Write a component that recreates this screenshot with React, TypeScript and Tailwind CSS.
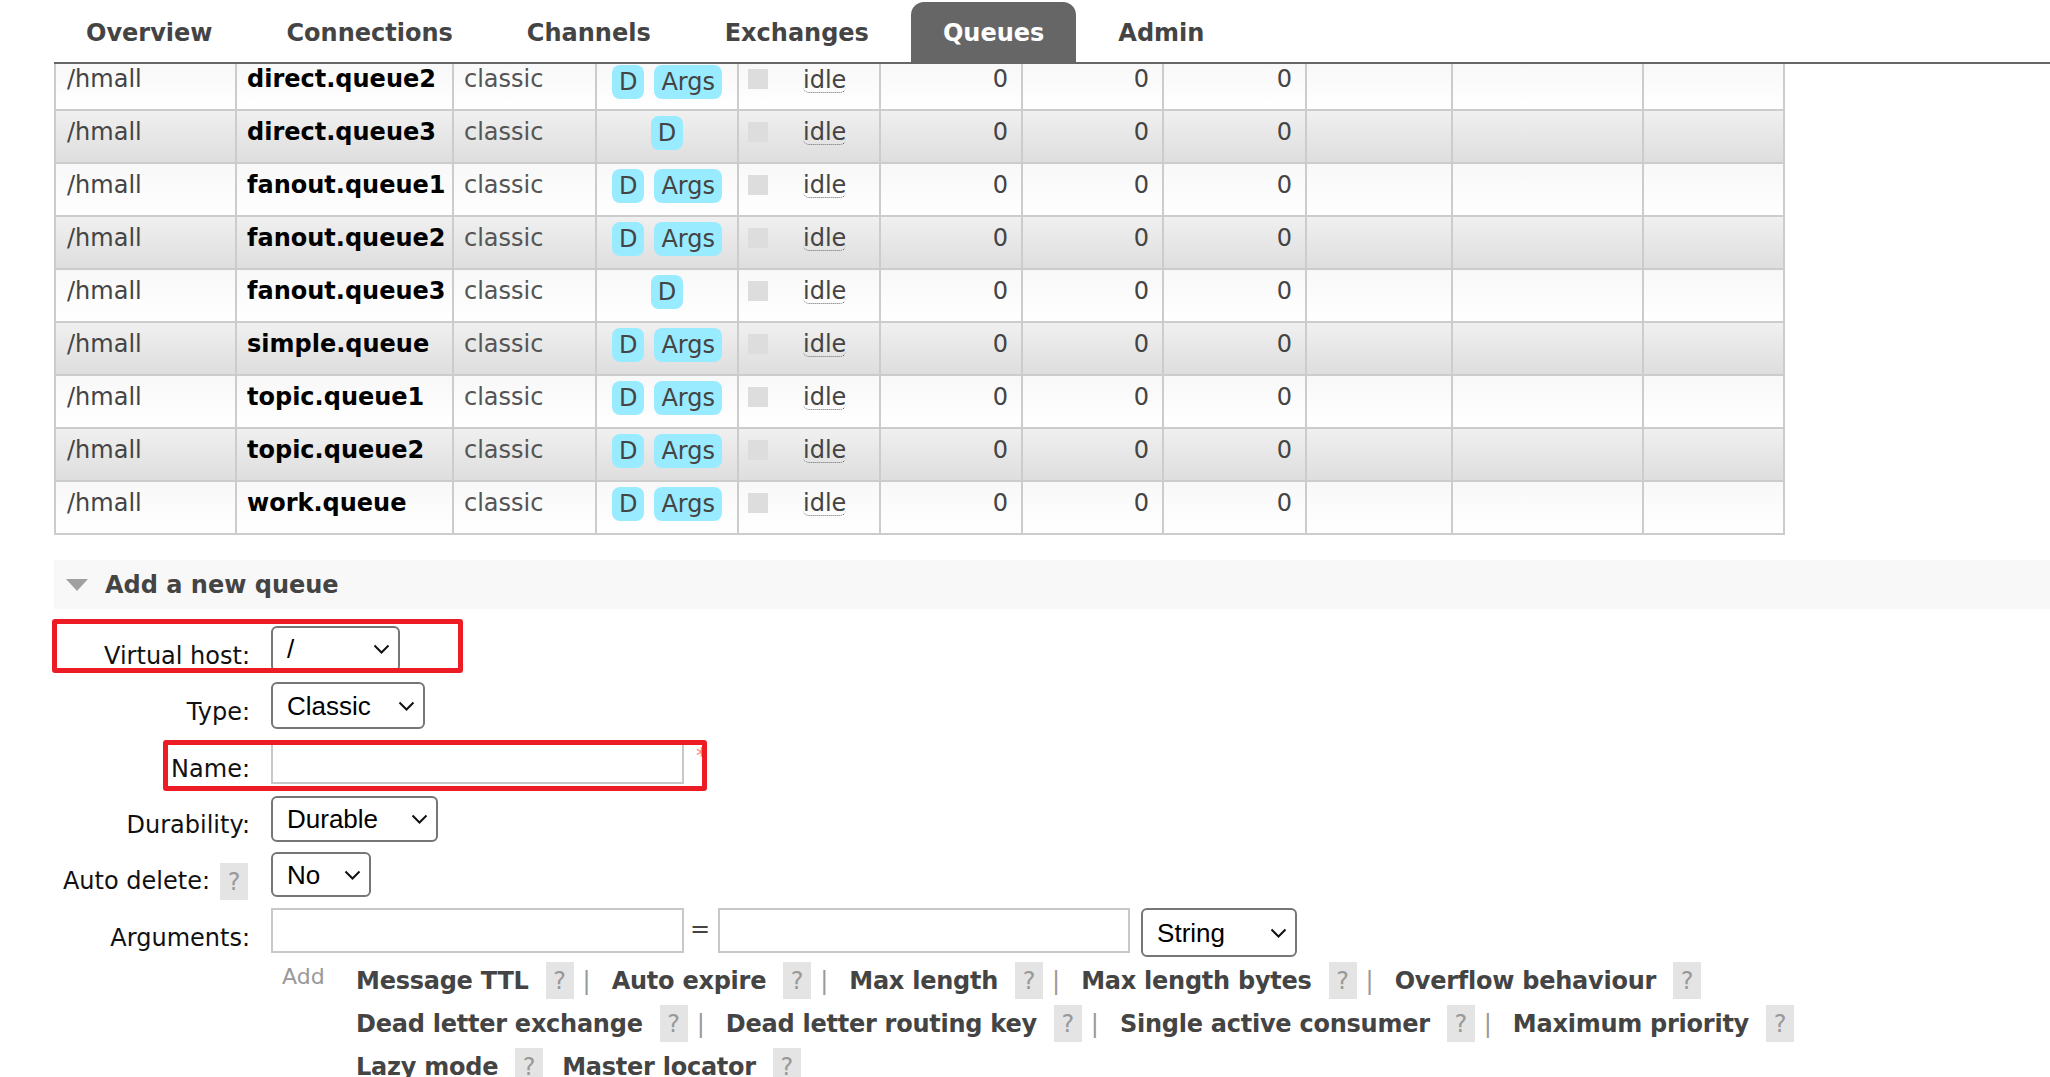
import { Fragment } from 'react'
import clsx from 'clsx'

const TABS = ['Overview', 'Connections', 'Channels', 'Exchanges', 'Queues', 'Admin']

const QUEUES = [
  { name: 'direct.queue2', args: true },
  { name: 'direct.queue3', args: false },
  { name: 'fanout.queue1', args: true },
  { name: 'fanout.queue2', args: true },
  { name: 'fanout.queue3', args: false },
  { name: 'simple.queue', args: true },
  { name: 'topic.queue1', args: true },
  { name: 'topic.queue2', args: true },
  { name: 'work.queue', args: true },
]

const LINK_LINES = [
  { items: ['Message TTL', 'Auto expire', 'Max length', 'Max length bytes', 'Overflow behaviour'], pipes: true },
  { items: ['Dead letter exchange', 'Dead letter routing key', 'Single active consumer', 'Maximum priority'], pipes: true },
  { items: ['Lazy mode', 'Master locator'], pipes: false },
]

function Chevron() {
  return (
    <svg width="17" height="10" viewBox="0 0 17 10" className="shrink-0">
      <path d="M1.5 1.5 L8.5 8.5 L15.5 1.5" fill="none" stroke="#111" strokeWidth="2" />
    </svg>
  )
}

function FakeSelect({ value, w, h }: { value: string; w: string; h: string }) {
  return (
    <div
      className={clsx(
        'flex items-center justify-between rounded-[6px] border-2 border-[#767676] bg-white pl-[14px] pr-[8px] font-["Liberation_Sans",Arial,sans-serif] text-[26px] text-black',
        w,
        h,
      )}
    >
      <span>{value}</span>
      <Chevron />
    </div>
  )
}

function HelpBox({ className }: { className?: string }) {
  return (
    <span
      className={clsx(
        'flex h-[37px] w-[28px] items-center justify-center bg-[#e4e4e4] font-normal tracking-normal text-[#999]',
        className,
      )}
    >
      ?
    </span>
  )
}

function Cell({ w, className, children }: { w: string; className?: string; children?: React.ReactNode }) {
  return <div className={clsx('shrink-0 border-r-2 border-[#ccc]', w, className)}>{children}</div>
}

function QueueRow({ name, args, index }: { name: string; args: boolean; index: number }) {
  const first = index === 0
  const alt = index % 2 === 1
  const textPt = first ? 'pt-[1px]' : 'pt-[7px]'

  return (
    <div
      className={clsx(
        'flex border-b-2 border-[#ccc] bg-linear-to-b',
        first ? 'h-[47px]' : 'h-[53px]',
        alt ? 'from-[#f0f0f0] to-[#dedede]' : 'from-[#f8f8f8] to-white',
      )}
    >
      <Cell w="w-[181px]" className={clsx('pl-[11px] text-[#444]', textPt)}>
        /hmall
      </Cell>
      <Cell w="w-[217px]" className={clsx('pl-[10px] font-bold text-black', textPt)}>
        {name}
      </Cell>
      <Cell w="w-[143px]" className={clsx('pl-[10px] text-[#555]', textPt)}>
        classic
      </Cell>
      <Cell w="w-[142px]" className={clsx('flex items-start justify-center gap-[10px]', first ? 'pt-[1px]' : 'pt-[5px]')}>
        <span className="rounded-[8px] bg-[#99ebff] px-[7px] py-[3px] text-[#444]">D</span>
        {args && <span className="rounded-[8px] bg-[#99ebff] px-[7px] py-[3px] text-[#444]">Args</span>}
      </Cell>
      <Cell w="w-[142px]" className="relative">
        <div className={clsx('flex items-start', first ? 'pt-[5px]' : 'pt-[11px]')}>
          <span className="ml-[9px] h-[20px] w-[20px] bg-[#ddd]" />
        </div>
        <span
          className={clsx(
            'absolute left-[64px] inline-block rounded-[6px] border-b-[1.5px] border-dotted border-[#666] leading-[24px] text-[#444]',
            first ? 'top-[4px]' : 'top-[9px]',
          )}
        >
          idle
        </span>
      </Cell>
      <Cell w="w-[142px]" className={clsx('pr-[13px] text-right text-[#444]', textPt)}>
        0
      </Cell>
      <Cell w="w-[141px]" className={clsx('pr-[13px] text-right text-[#444]', textPt)}>
        0
      </Cell>
      <Cell w="w-[143px]" className={clsx('pr-[13px] text-right text-[#444]', textPt)}>
        0
      </Cell>
      <Cell w="w-[146px]" />
      <Cell w="w-[191px]" />
      <Cell w="w-[141px]" />
    </div>
  )
}

function FormRow({
  label,
  rowTop,
  labelTop,
  help,
  children,
}: {
  label: string
  rowTop: string
  labelTop: string
  help?: boolean
  children: React.ReactNode
}) {
  return (
    <div className={clsx('flex items-start', rowTop)}>
      <div className="ml-[54px] flex w-[196px] shrink-0 items-start justify-end text-[#111]">
        <span className={labelTop}>{label}</span>
        {help && <HelpBox className="mr-[2px] ml-[10px] mt-[11px] w-[26px]" />}
      </div>
      <div className="ml-[21px] flex items-start">{children}</div>
    </div>
  )
}

export default function App() {
  return (
    <div className="h-[1077px] w-[2050px] overflow-hidden bg-white font-['DejaVu_Sans',Verdana,sans-serif] text-[24px] leading-[28px]">
      {/* tabs */}
      <div className="ml-[54px] flex gap-[10px] border-b-2 border-[#666] pt-[2px]">
        {TABS.map((tab) => (
          <div
            key={tab}
            className={clsx(
              'h-[60px] px-[32px] pt-[17px] font-bold',
              tab === 'Queues' ? 'rounded-t-[13px] bg-[#666] text-white' : 'text-[#444]',
            )}
          >
            {tab}
          </div>
        ))}
      </div>

      {/* queue list */}
      <div className="ml-[54px] w-[1731px] border-l-2 border-[#ccc]">
        {QUEUES.map((q, i) => (
          <QueueRow key={q.name} name={q.name} args={q.args} index={i} />
        ))}
      </div>

      {/* add a new queue */}
      <div className="mt-[25px] ml-[54px] flex h-[49px] items-center bg-[#f8f8f8] pl-[12px]">
        <svg width="22" height="12" viewBox="0 0 22 12">
          <path d="M0 0 L22 0 L11 12 Z" fill="#a0a0a0" />
        </svg>
        <span className="ml-[17px] font-bold text-[#444]">Add a new queue</span>
      </div>

      <div className="relative flex flex-col">
        <FormRow label="Virtual host:" rowTop="mt-[17px]" labelTop="mt-[16px]">
          <FakeSelect value="/" w="w-[129px]" h="h-[46px]" />
        </FormRow>
        <FormRow label="Type:" rowTop="mt-[10px]" labelTop="mt-[16px]">
          <FakeSelect value="Classic" w="w-[154px]" h="h-[47px]" />
        </FormRow>
        <FormRow label="Name:" rowTop="mt-[14px]" labelTop="mt-[12px]">
          <input type="text" readOnly className="h-[41px] w-[413px] border-2 border-[#c8c8c8] bg-white" />
          <span className="mt-[2px] ml-[12px] text-[22px] leading-[22px] text-[#f77]">*</span>
        </FormRow>
        <FormRow label="Durability:" rowTop="mt-[12px]" labelTop="mt-[15px]">
          <FakeSelect value="Durable" w="w-[167px]" h="h-[46px]" />
        </FormRow>
        <FormRow label="Auto delete:" rowTop="mt-[10px]" labelTop="mt-[15px]" help>
          <FakeSelect value="No" w="w-[100px]" h="h-[45px]" />
        </FormRow>
        <FormRow label="Arguments:" rowTop="mt-[8px]" labelTop="mt-[16px]">
          <input type="text" readOnly className="h-[45px] w-[413px] border-2 border-[#c8c8c8] bg-white" />
          <span className="mt-[7px] ml-[6px] text-[#444]">=</span>
          <input type="text" readOnly className="ml-[8px] h-[45px] w-[412px] border-2 border-[#c8c8c8] bg-white" />
          <div className="ml-[11px]">
            <FakeSelect value="String" w="w-[156px]" h="h-[49px]" />
          </div>
        </FormRow>

        {/* argument shortcuts */}
        <div className="mt-[2px] ml-[271px] flex">
          <div className="w-[85px] shrink-0 pt-[5px] pl-[11px] text-[22px] leading-[26px] text-[#999]">Add</div>
          <div className="flex flex-col">
            {LINK_LINES.map((line) => (
              <div key={line.items[0]} className="flex h-[43px] items-center">
                {line.items.map((item, i) => (
                  <Fragment key={item}>
                    {i > 0 && line.pipes && <span className="ml-[9px] text-[#999]">|</span>}
                    <span
                      className={clsx(
                        'font-bold tracking-[-0.25px] text-[#444]',
                        i > 0 && (line.pipes ? 'ml-[21px]' : 'ml-[19px]'),
                      )}
                    >
                      {item}
                    </span>
                    <HelpBox className="ml-[17px]" />
                  </Fragment>
                ))}
              </div>
            ))}
          </div>
        </div>

        {/* annotation boxes */}
        <div className="absolute top-[10px] left-[52px] h-[54px] w-[411px] rounded-[3px] border-[5px] border-[#ed1c24]" />
        <div className="absolute top-[131px] left-[163px] h-[51px] w-[544px] rounded-[3px] border-[5px] border-[#ed1c24]" />
      </div>
    </div>
  )
}
